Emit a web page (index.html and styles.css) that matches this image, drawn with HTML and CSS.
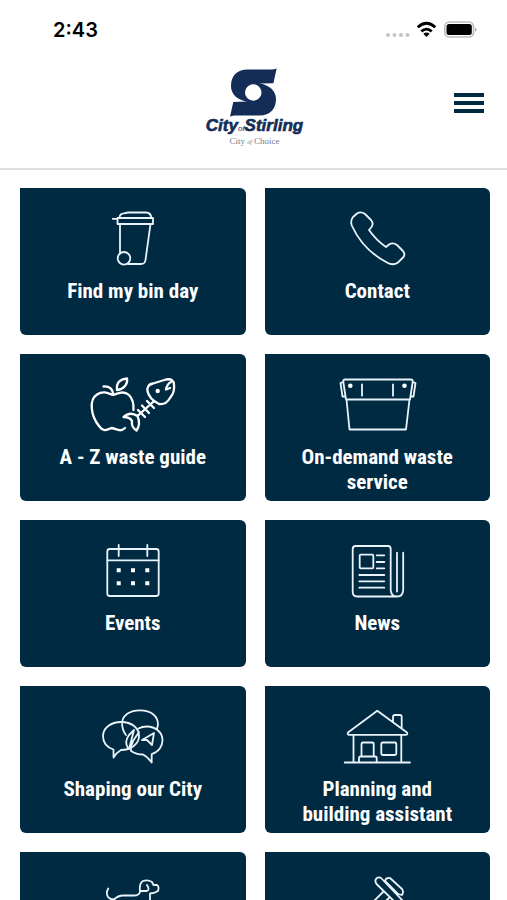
FILE: index.html
```html
<!DOCTYPE html>
<html lang="en">
<head>
<meta charset="utf-8">
<meta name="viewport" content="width=device-width, initial-scale=1">
<title>City of Stirling</title>
<link rel="stylesheet" href="styles.css">
</head>
<body>
<div class="app">
  <div class="status">
    <span class="clock">2:43</span>
    <svg class="signals" width="92" height="20" viewBox="385 20 92 20" aria-hidden="true">
      <g fill="#c4c4c4"><circle cx="388" cy="35" r="2"/><circle cx="394.500" cy="35" r="2"/><circle cx="401" cy="35" r="2"/><circle cx="407.500" cy="35" r="2"/></g>
      <g fill="none" stroke="#000" stroke-width="2.800"><path d="M417.700 27.300Q426.500 19.300 435.300 27.300"/><path d="M421.300 31.400Q426.500 26.800 431.700 31.400"/></g>
      <path d="M423.300 33.800Q426.500 31.300 429.700 33.800L426.500 37Z"/>
      <rect x="444.800" y="22" width="28.700" height="15" rx="4.500" fill="#fff" stroke="#bdbdbd" stroke-width="1.600"/>
      <rect x="446.500" y="24" width="25.300" height="11" rx="2.500"/>
      <path d="M475 27.500Q478 29.500 475 32Z" fill="#aaa"/>
    </svg>
  </div>
  <header class="header">
    <a class="logo" href="#">
      <svg width="50" height="50" viewBox="229 68 50 50" aria-hidden="true">
        <path fill="#142d57" fill-rule="evenodd" d="M276.700 68.300C275 69.500 273 69.600 270 69.600H248C236 69.600 231 77 231 86C231 94 237 100 247 101.600L233.300 102L230 116.700C232 115.600 234 115.600 236 115.600H259C271 115.600 276 108 276 99C276 91 269 84.600 259 83.600L273.400 83.300ZM253.300 84.300A8.200 8.200 0 1 1 253.200 84.300Z"/>
      </svg>
      <span class="brand">City<small>of</small>Stirling</span>
      <span class="tagline">City <small>of</small> Choice</span>
    </a>
    <button class="menu" type="button" aria-label="Menu"><i></i><i></i><i></i></button>
  </header>
  <main class="tiles">
    <a class="tile" href="#">
      <svg class="icon" viewBox="0 0 90 62"><path d="M31.500 9C31.500 6 33 4.500 36 4.300L40 3.500H58C61 3.500 63 5 63.300 9M29.500 9H65V15H29.500ZM24.700 9.800H29.500M32 15V44.500M40 55H53Q57 55 57.500 51L62.500 15"/><circle cx="36" cy="49.300" r="6.300"/></svg>
      <span>Find my bin day</span>
    </a>
    <a class="tile" href="#">
      <svg class="icon" viewBox="0 0 90 62"><path d="M21 8L25 4.500Q29 2 33 5L39 11Q42 14.500 39.500 18L37 21Q44 31 54 38L57 35.500Q61 33 65 36L71 42Q74 46 70.500 49L66 53.500Q61 57 55 53.500Q31 41 20 17Q18 12 21 8Z"/></svg>
      <span>Contact</span>
    </a>
    <a class="tile" href="#">
      <svg class="icon bold" viewBox="0 0 90 62"><path d="M37 53C32 57.500 29 54 24 53C19 54 16 58 11 51C3 41 .500 25 9 19.500C15 15.500 20 18 25 20C30 18 36 15.500 41 20Q46 25 45.500 35M25 20Q25 11 15.500 11.500M29 15C28 7 33 4 39 3.500C40 9 36 14 29 15ZM49.500 41Q42 36 35.500 42Q42 42 44 46Q43 52 48.500 55.500Q53 49 49.500 41L65 27M50 35L57 42M54 30.500L61 38M59 26L66 33M60 12Q61 9 65 8.500L78 4.500Q86 3 86 10Q87 17 82 23Q78 30 71 29Q61 24 59.500 16Q59 14 60 12M83 7Q79 9 78 14.500L82 13"/><circle class="dot" cx="69.700" cy="16" r="2.200"/></svg>
      <span>A - Z waste guide</span>
    </a>
    <a class="tile" href="#">
      <svg class="icon" viewBox="0 0 90 62"><path d="M13 4.500H79Q81 4.500 80.700 7L78 24.500H14L11.300 7Q11 4.500 13 4.500ZM14.500 24.500L17.500 54.500H74L77.500 24.500M11 7L8.500 8L10.500 21.500H13.500M81 7L83.500 8L81.500 21.500H78.500M30 9.300V20.700M61 9.300V20.700"/><circle class="dot" cx="18.300" cy="10.700" r="2.300"/><circle class="dot" cx="72.500" cy="10.700" r="2.300"/></svg>
      <span>On-demand waste service</span>
    </a>
    <a class="tile" href="#">
      <svg class="icon" viewBox="0 0 90 62"><rect x="19.300" y="8" width="51.400" height="47" rx="2.500"/><path d="M19.300 19.300H70.700M30.700 4V15M59.300 4V15"/><path class="dot" d="M28.700 27.300h4v4h-4ZM43 27.300h4v4h-4ZM57.300 27.300h4v4h-4ZM28.700 40.300h4v4h-4ZM43 40.300h4v4h-4ZM57.300 40.300h4v4h-4Z"/></svg>
      <span>Events</span>
    </a>
    <a class="tile" href="#">
      <svg class="icon" viewBox="0 0 90 62"><path d="M65 55.500H25Q20.700 55.500 20.700 51V8Q20.700 5 23.700 5H56Q58.700 5 58.700 8V49Q59 55.500 65 55.500Q71 55.500 71.200 49V11.700M65 11.700V50.500M44.700 14.300H52.300M44.700 21H52.300M44.700 27.300H52.300M27.300 34H52.300M27.300 40.300H52.300M27.300 46.700H52.300"/><rect x="27.700" y="13.700" width="13.600" height="13.600" rx="1"/></svg>
      <span>News</span>
    </a>
    <a class="tile" href="#">
      <svg class="icon" viewBox="0 0 90 62"><path d="M25.500 50.500V42.500C18 40 15 35 15 29C15 21 23 15 33 15C44 15 51 21 51 29C51 37 43 43 33 43Q28 46 25.500 50.500ZM34 15.500C35 8 42 3.300 52 3.300C63 3.300 70 9 70 17.500L69 22M34 15.500Q34 23 38 28M43 40V44Q48 47.500 55 47.500Q60 50 63.700 55.500V47C71 45 74.500 39 74.500 33C74.500 25 67 19.500 59 19.500Q54 19.500 50.500 21.500M54 33L66 26L64 38L59 33ZM40 41Q36 35 41 28L46 23L41 42L45 34L51 25M45 34Q44 39 40 41"/></svg>
      <span>Shaping our City</span>
    </a>
    <a class="tile" href="#">
      <svg class="icon" viewBox="0 0 90 62"><path d="M45.300 3.700L75 25.500Q76 27.800 74 27.800H17Q15 27.800 16 25.500ZM21.500 28V55.300M69.300 28V55.300M12.700 55.500H78M61 15V10Q61 8 63 8H68Q69.700 8 69.700 10V21.500M29.500 49.500V37Q29.500 35.500 31 35.500H40Q41.700 35.500 41.700 37V49.500M27 55.300V51Q27 49.500 28.500 49.500H43Q44.700 49.500 44.700 51V55.300"/><rect x="49.300" y="35.500" width="15" height="12.500" rx="1.500"/></svg>
      <span>Planning and building assistant</span>
    </a>
    <a class="tile" href="#" aria-label="Animals">
      <svg class="icon" viewBox="0 0 90 62"><path d="M20.300 15.500Q17.500 20 20 24Q22 26.500 26 26.500Q30 22.500 35 22.500H46Q51 22.500 52 19Q51 10 55 8Q60 6.500 64 9L65.500 12H69Q71.500 13.500 70 18Q66 20.500 62 20.500V32Q61 39 56 40V56H51V42H34L29 56H24L26 42V27M59 12Q62 17 59 18H53"/></svg>
    </a>
    <a class="tile" href="#" aria-label="Maintenance">
      <svg class="icon" viewBox="0 0 90 62"><path d="M44.500 11Q42 7 45 5Q48 3.500 50 6L71 28L67 33ZM53 8Q54 4 58 5L70 16Q72 19 70 22L66 21ZM51 19L22 48L26 54L57 25"/></svg>
    </a>
  </main>
</div>
</body>
</html>
```
FILE: styles.css
```css
* { box-sizing: border-box; }

body {
  margin: 0;
  background: #fff;
  font-family: "Liberation Sans", Arial, sans-serif;
}

.app {
  height: 100vh;
  overflow: hidden;
}

.status {
  display: flex;
  align-items: center;
  justify-content: space-between;
  height: 60px;
  padding: 0 30px 0 53px;
}

.clock {
  font: 600 20px/24px Inter, sans-serif;
  color: #000;
}

.header {
  display: grid;
  grid-template-columns: 1fr auto 1fr;
  height: 110px;
  padding: 8px 22px 0 24px;
  border-bottom: 2px solid #dedede;
}

.logo {
  grid-column: 2;
  display: flex;
  flex-direction: column;
  align-items: center;
  color: #142d57;
  text-decoration: none;
}

.logo svg { display: block; }

.brand {
  font-size: 17px;
  line-height: 15px;
  font-weight: 900;
  font-style: italic;
  -webkit-text-stroke: 0.6px #142d57;
}

.brand small {
  font-size: 8px;
  font-weight: 400;
  -webkit-text-stroke: 0;
}

.tagline {
  font: 9px/10px "Liberation Serif", serif;
  color: #6f7b93;
}

.tagline small {
  font-size: 6px;
  font-style: italic;
}

.menu {
  justify-self: end;
  align-self: start;
  display: flex;
  flex-direction: column;
  gap: 4px;
  width: 32px;
  margin-top: 25px;
  padding: 0 1px;
  border: 0;
  background: none;
}

.menu i {
  width: 100%;
  height: 4px;
  background: #002a42;
}

.tiles {
  display: grid;
  grid-template-columns: 1fr 1fr;
  gap: 19px;
  padding: 18px 17px 18px 20px;
}

.tile {
  display: flex;
  flex-direction: column;
  align-items: center;
  gap: 8px;
  height: 147px;
  padding: 21px 28px 0;
  border-radius: 0 6px 6px 6px;
  background: #002a42;
  color: #fff;
  font: 700 21px/25px "Roboto Condensed", "Liberation Sans Narrow", "Liberation Sans", sans-serif;
  text-align: center;
  text-decoration: none;
}

.icon {
  flex: none;
  width: 90px;
  height: 62px;
  fill: none;
  stroke: #e9f3fa;
  stroke-width: 1.8;
  stroke-linecap: round;
  stroke-linejoin: round;
}

.icon.bold { stroke: #fff; stroke-width: 2.3; }

.icon .dot {
  fill: #fff;
  stroke: none;
}
```
